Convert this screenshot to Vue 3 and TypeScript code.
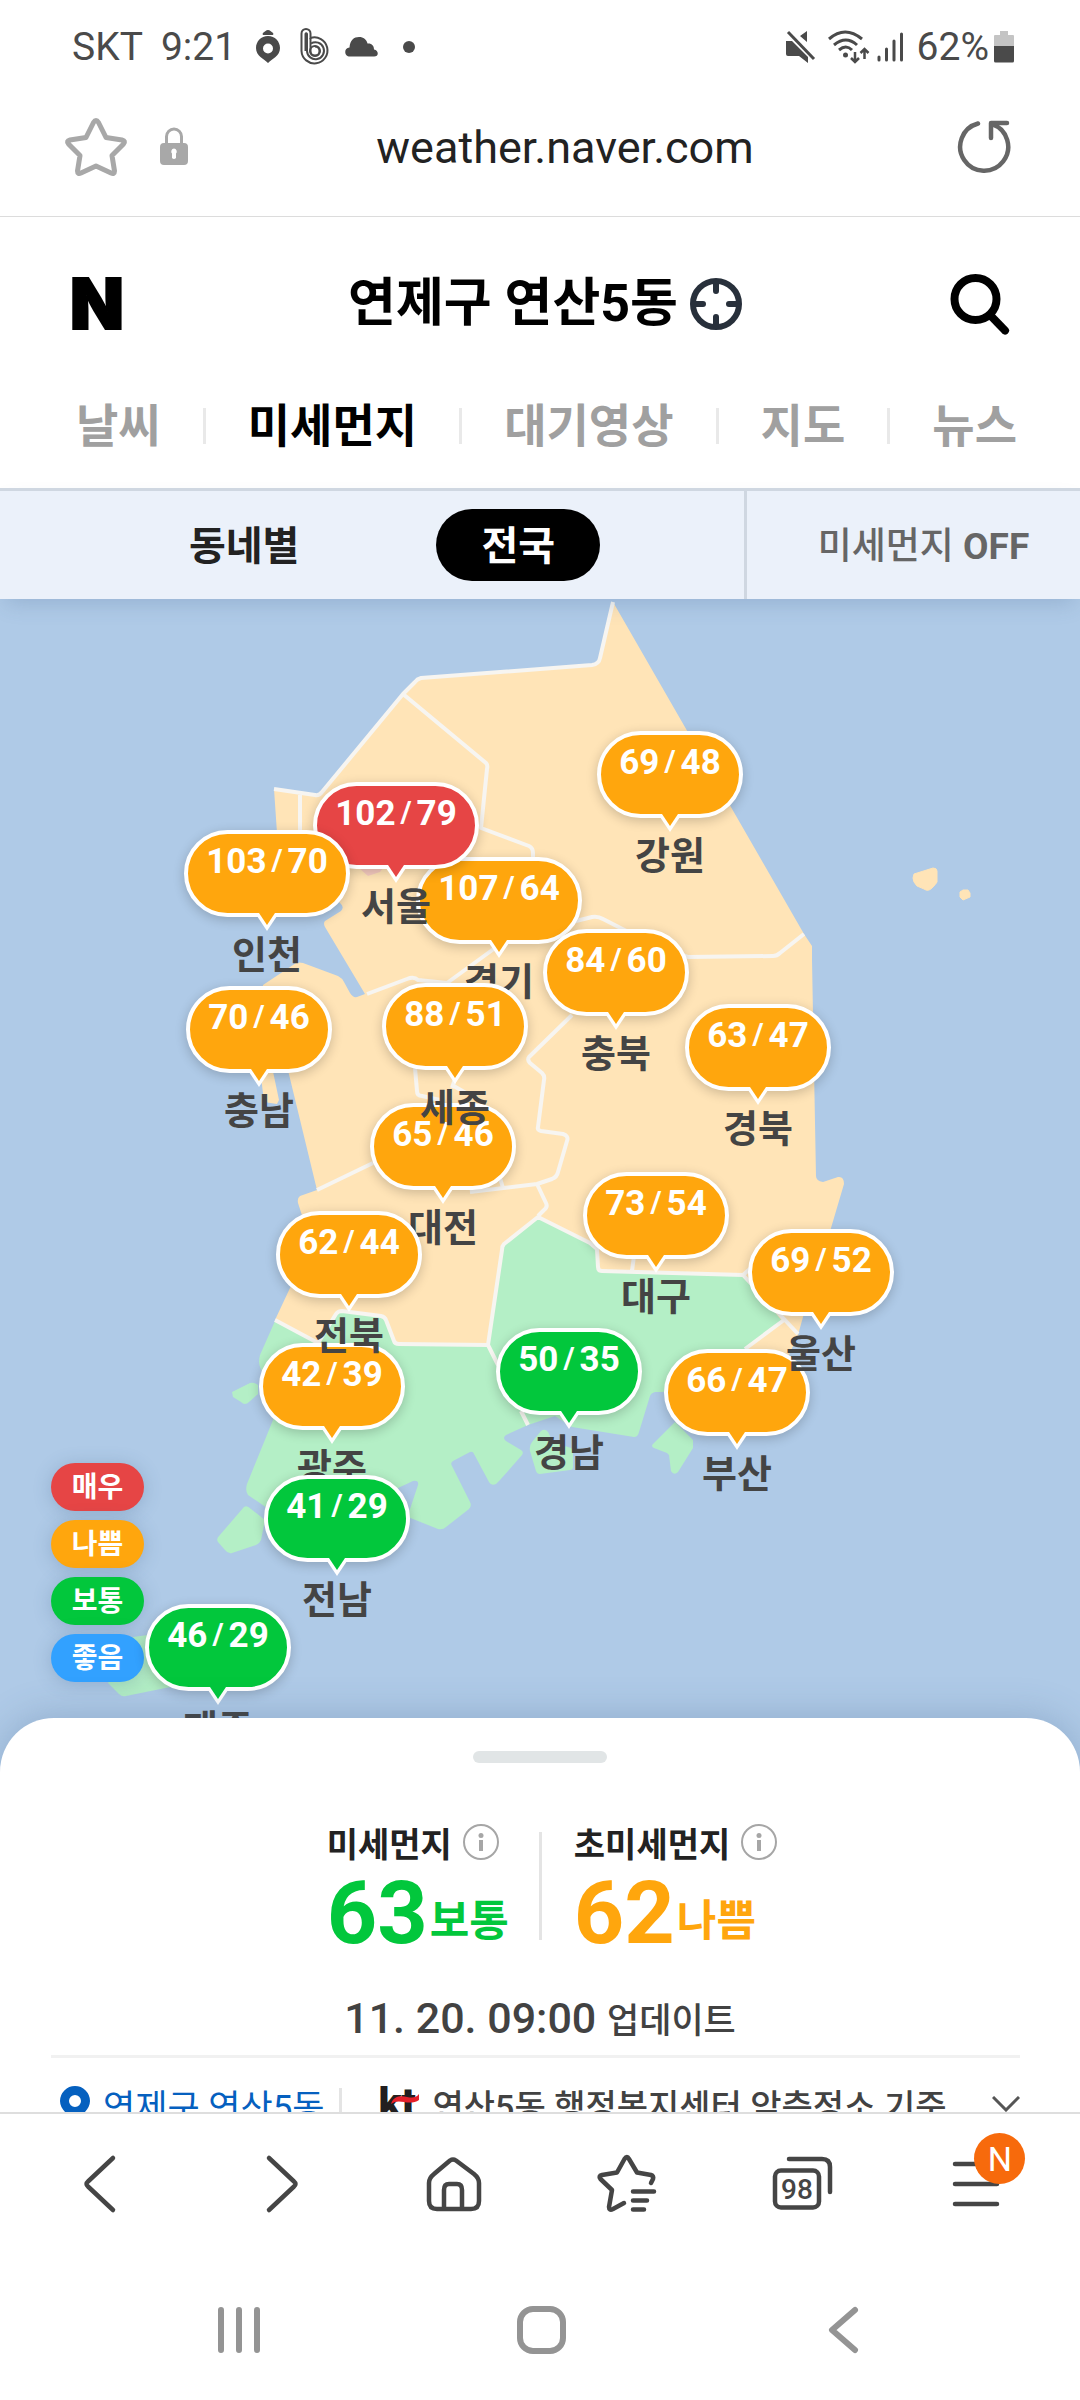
<script setup lang="ts">
type Grade = 'worst' | 'bad' | 'normal' | 'good'

interface Pin {
  name: string
  pm10: number
  pm25: number
  grade: Grade
  x: number
  y: number
}

const MAP_WIDTH = 1080
const MAP_HEIGHT = 1173

// Later entries are stacked above earlier ones.
const pins: Pin[] = [
  { name: '경기', pm10: 107, pm25: 64, grade: 'bad', x: 499, y: 258 },
  { name: '서울', pm10: 102, pm25: 79, grade: 'worst', x: 396, y: 183 },
  { name: '인천', pm10: 103, pm25: 70, grade: 'bad', x: 267, y: 231 },
  { name: '강원', pm10: 69, pm25: 48, grade: 'bad', x: 670, y: 132 },
  { name: '충북', pm10: 84, pm25: 60, grade: 'bad', x: 616, y: 330 },
  { name: '경북', pm10: 63, pm25: 47, grade: 'bad', x: 758, y: 405 },
  { name: '충남', pm10: 70, pm25: 46, grade: 'bad', x: 259, y: 387 },
  { name: '대전', pm10: 65, pm25: 46, grade: 'bad', x: 443, y: 504 },
  { name: '세종', pm10: 88, pm25: 51, grade: 'bad', x: 455, y: 384 },
  { name: '광주', pm10: 42, pm25: 39, grade: 'bad', x: 332, y: 744 },
  { name: '전북', pm10: 62, pm25: 44, grade: 'bad', x: 349, y: 612 },
  { name: '대구', pm10: 73, pm25: 54, grade: 'bad', x: 656, y: 573 },
  { name: '부산', pm10: 66, pm25: 47, grade: 'bad', x: 737, y: 750 },
  { name: '울산', pm10: 69, pm25: 52, grade: 'bad', x: 821, y: 630 },
  { name: '경남', pm10: 50, pm25: 35, grade: 'normal', x: 569, y: 729 },
  { name: '전남', pm10: 41, pm25: 29, grade: 'normal', x: 337, y: 876 },
  { name: '제주', pm10: 46, pm25: 29, grade: 'normal', x: 218, y: 1005 },
]

const legend: { label: string; grade: Grade }[] = [
  { label: '매우', grade: 'worst' },
  { label: '나쁨', grade: 'bad' },
  { label: '보통', grade: 'normal' },
  { label: '좋음', grade: 'good' },
]

const tabs = ['날씨', '미세먼지', '대기영상', '지도', '뉴스']
const activeTab = '미세먼지'

const metrics: { name: string; value: number; label: string; grade: Grade }[] = [
  { name: '미세먼지', value: 63, label: '보통', grade: 'normal' },
  { name: '초미세먼지', value: 62, label: '나쁨', grade: 'bad' },
]

const pinStyle = (p: Pin) => ({
  left: `${(p.x / MAP_WIDTH) * 100}%`,
  top: `${(p.y / MAP_HEIGHT) * 100}%`,
})
</script>

<template>
  <div class="page">
    <div class="status">
      <span>SKT</span>
      <span class="clock">9:21</span>
      <svg class="s-pin" width="24" height="34" viewBox="0 0 24 34">
        <path d="M12 0c2 0 3 1.600 4.500 2.400 1.200.600 1.200 2.600 0 2.600h-9c-1.200 0-1.200-2 0-2.600C9 1.600 10 0 12 0z" fill="currentColor" />
        <path fill-rule="evenodd" d="M12 6c7 0 12 5.500 12 12 0 8-8 11-12 15C8 29 0 26 0 18 0 11.500 5 6 12 6zm0 7.500a5 5 0 1 0 0 10 5 5 0 0 0 0-10z" fill="currentColor" />
      </svg>
      <svg class="s-b" width="30" height="38" viewBox="0 0 30 38" fill="none" stroke="currentColor" stroke-width="2">
        <path d="M1.500 23V5.500a4.500 4.500 0 0 1 9 0V10a13 13 0 1 1-9 13z" />
        <path d="M5.500 23V6q.700-1.500 1.500 0v17a8.500 8.500 0 1 0 4-7.500" />
        <path d="M10.500 10v13a4.500 4.500 0 1 0 4.500-4.500" />
        <circle cx="15" cy="23" r="5" />
      </svg>
      <svg class="s-cloud" width="33" height="20" viewBox="0 0 33 20">
        <path d="M5 19.500C-1 19.500-1.500 11 4.500 10.500 5 3 9 0 14 0c4.500 0 7.500 2.500 8.500 6.500 4-.500 6.500 2 6.500 6 5 1 5 7 0 7z" fill="currentColor" />
      </svg>
      <i class="s-dot"></i>
      <span class="grow"></span>
      <svg width="30" height="34" viewBox="0 0 30 34">
        <path d="M0 11h6l16 16v6l-9-7H2q-2 0-2-2zM21 1v11l-7-6z" fill="currentColor" />
        <path d="M2 2l26 27" stroke="currentColor" stroke-width="3" />
      </svg>
      <svg class="s-wifi" width="42" height="34" viewBox="0 0 42 34" fill="none" stroke="currentColor" stroke-width="3">
        <path d="M1 9q16-14 33 0M6 15q12-10 23 0M11 20q7-6 13 0" />
        <circle cx="17.500" cy="25" r="2.500" fill="currentColor" stroke="none" />
        <path d="M27 22v9M23 28l4 4 4-4M36.500 29v-9M32.500 23l4-4 4 4" stroke-width="2.500" />
      </svg>
      <svg class="s-sig" width="27" height="32" viewBox="0 0 27 32" stroke="currentColor" stroke-width="3" stroke-linecap="round">
        <path d="M2 26v3M9.500 18v11M17 10v19M24.500 3v26" />
      </svg>
      <span>62%</span>
      <svg class="s-bat" width="20" height="32" viewBox="0 0 20 32">
        <path d="M6 0h8v4h5q1 0 1 1v11H0V5q0-1 1-1h5z" fill="#c4c4c4" />
        <path d="M0 15h20v15q0 1.500-1.500 1.500h-17Q0 31.500 0 30z" fill="currentColor" />
      </svg>
    </div>

    <div class="address">
      <button class="plain star" aria-label="즐겨찾기">
        <svg width="64" height="64" viewBox="0 0 64 64" fill="none" stroke="#a8a8a8" stroke-width="5" stroke-linejoin="round">
          <path d="M29.500 7.500q2.500-4 5 0l7.500 15 16 2.500q4 1 1.500 4L48 40.500l2.500 15.500q0 3.500-3.500 2L32 51l-15 7q-3.500 1.500-3.500-2L16 40.500 4.500 29q-2.500-3 1.500-4l16-2.500z" />
        </svg>
      </button>
      <svg class="lock" width="28" height="40" viewBox="0 0 28 40">
        <path d="M6.500 18V9.500a7.500 7.500 0 0 1 15 0V18" fill="none" stroke="#a8a8a8" stroke-width="3" />
        <path fill-rule="evenodd" d="M4 16h20q4 0 4 4v14q0 4-4 4H4q-4 0-4-4V20q0-4 4-4zm10 5.500a3 3 0 0 0-2 5V31q2 2 4 0v-4.500a3 3 0 0 0-2-5z" fill="#a8a8a8" />
      </svg>
      <input class="url" type="text" value="weather.naver.com" aria-label="주소" />
      <button class="plain reload" aria-label="새로고침">
        <svg width="58" height="58" viewBox="0 0 58 58" fill="none" stroke="#666" stroke-width="4.500" stroke-linecap="round" stroke-linejoin="round">
          <path d="M22 5.500A24 24 0 1 0 36 6" />
          <path d="M51 5H35v15" />
        </svg>
      </button>
    </div>

    <header class="header">
      <div class="title-row">
        <a class="logo" href="#" aria-label="네이버">N</a>
        <h1 class="title">
          연제구 연산5동
          <svg width="52" height="52" viewBox="0 0 52 52" fill="none" stroke="#28303b" stroke-width="6" stroke-linecap="round">
            <circle cx="26" cy="26" r="23" />
            <path d="M26 4v9M26 39v9M4 26h9M39 26h9" />
          </svg>
        </h1>
        <button class="plain search" aria-label="검색">
          <svg width="60" height="62" viewBox="0 0 60 62" fill="none" stroke="#000" stroke-width="8" stroke-linecap="round">
            <circle cx="25.500" cy="26" r="21" />
            <path d="M41 43l14 14.500" />
          </svg>
        </button>
      </div>
      <nav class="tabs">
        <template v-for="(tab, i) in tabs" :key="tab">
          <i v-if="i > 0" class="tab-line"></i>
          <a href="#" :class="['tab', { active: tab === activeTab }]">{{ tab }}</a>
        </template>
      </nav>
    </header>

    <div class="subbar">
      <div class="scope">
        <button class="chip">동네별</button>
        <button class="chip on">전국</button>
      </div>
      <button class="toggle">미세먼지 <b>OFF</b></button>
    </div>

    <main class="map">
      <svg class="land" viewBox="0 599 1080 1173" aria-hidden="true">
        <g fill="#ffe4b7">
          <path d="M613 602L600 658Q599 664 592 665L421 678Q417 679 415 682L403 694 322 792Q319 796 315 795L274 789 277 833 292 890 336 900Q346 906 341 911L325 921Q323 923 325 927L365 994 357 997Q353 998 350 993L344 982Q342 978 338 976L303 963Q299 962 296 963L263 985 255 1040 262 1085 264 1102 277 1104 279 1100 271 1062 286 1062 317 1190 300 1196Q297 1198 298 1203L310 1240 290 1288 275 1320 330 1380 600 1340 715 1370 780 1375 798 1335 803 1317 831 1228 844 1184Q844 1176 838 1177L823 1182Q816 1181 816 1176L812 960 812 946 804 934z" />
          <path d="M914 874L933 868Q937 868 937 871V882Q936 884 932 888 928 892 924 889L917 886Q913 882 913 878zM963 890l5 0 2 3v4l-7 3-3-3v-5z" stroke="#ffe4b7" stroke-width="1" stroke-linejoin="round" />
        </g>
        <path d="M355 862l5 7 8 7 12-4 6-8z" fill="#f6cbc0" />
        <g fill="#b4efc6">
          <path d="M275 1321L260 1355Q258 1362 260 1367L276 1400 273 1420 247 1484Q245 1491 248 1495L270 1510 300 1540 398 1488 413 1481Q419 1480 418 1485L409 1512 408 1517 438 1529Q443 1530 446 1527L469 1509Q472 1506 470 1502L452 1466Q450 1463 453 1461L470 1452Q473 1451 474 1454L489 1482Q491 1486 496 1484L500 1480 522 1455Q524 1452 521 1450L506 1441Q502 1438 506 1435L528 1425 555 1416 572 1427 634 1437Q638 1437 639 1432L650 1396Q651 1393 655 1392L663 1392 700 1380 745 1349 782 1321 745 1275 602 1271Q598 1271 598 1267L597 1249 590 1243 538 1217 504 1244Q502 1246 502 1250L488 1345 399 1344Q395 1344 394 1341L386 1320Q385 1317 381 1316L342 1311Q338 1311 336 1314L318 1343z" />
          <path d="M232 1392L250 1383Q254 1382 258 1385V1394L249 1402Q245 1406 241 1402L233 1397zM244 1507Q247 1505 251 1509L265 1520 261 1540Q260 1543 256 1545L232 1553Q228 1554 225 1550L218 1542Q216 1539 219 1536zM675 1422L693 1440V1448L678 1472Q674 1476 671 1471L669 1455 667 1453 654 1448Q650 1446 654 1443zM541 1431q4-3 7 1l5 10 18 6q2 2 2 5v14q0 3-3 3l-30 4q-3 0-4-3l-6-20q-1-5 2-9zM108 1683L133 1637 200 1628 225 1650 205 1680 126 1696Q122 1697 119 1694z" />
        </g>
        <g fill="none" stroke="#f7f5f1" stroke-width="4" stroke-linejoin="round">
          <path d="M613 602L600 658Q599 664 592 665L421 678Q417 679 415 682L403 694 322 792Q319 796 315 795L274 789" />
          <path d="M403 694L486 763Q488 765 487 769L481 828 529 846Q533 848 533 853V870L560 925 592 917Q598 916 603 919L640 938 688 957 773 956Q777 956 780 953L804 934" />
          <path d="M300 795v40M367 994L407 979Q414 976 418 980L447 983 495 948 530 930" />
          <path d="M572 1015L529 1057Q527 1060 530 1063L542 1073Q545 1076 544 1080L538 1127Q537 1130 541 1131L563 1134Q569 1136 567 1141L558 1172Q557 1177 552 1179L537 1184 470 1192M537 1184L546 1203Q548 1207 544 1210L538 1216" />
          <path d="M415 1068L417 1091Q417 1096 422 1096L440 1100M452 1088l4-12M452 1085l14 8M317 1190L373 1163M500 1178l3 10" />
          <path d="M275 1320L318 1343 336 1314Q338 1311 342 1311L381 1316Q385 1317 386 1320L394 1341Q395 1344 399 1344L488 1345 502 1250Q502 1246 504 1244L538 1217 590 1243 597 1249 598 1267Q598 1271 602 1271L743 1275 760 1260M743 1275L798 1334M784 1320L745 1349M634 1256l-2 15M488 1345l10 20M521 1411l7 14" />
        </g>
      </svg>

      <ul class="legend">
        <li v-for="l in legend" :key="l.label" :class="l.grade">{{ l.label }}</li>
      </ul>

      <a v-for="p in pins" :key="p.name" href="#" class="pin" :style="pinStyle(p)">
        <span :class="['bubble', p.grade, { wide: p.pm10 > 99 }]">
          <span>{{ p.pm10 }}</span><span class="slash">/</span><span>{{ p.pm25 }}</span>
          <svg class="tail" width="20" height="18" viewBox="0 0 20 18">
            <path d="M0 0h20v3L10 18 0 3z" fill="#fff" />
            <path d="M2 0h16L10 12z" fill="currentColor" />
          </svg>
        </span>
        <span class="pin-name">{{ p.name }}</span>
      </a>
    </main>

    <section class="sheet">
      <i class="handle"></i>
      <div class="metrics">
        <div v-for="m in metrics" :key="m.name" class="metric">
          <div class="metric-name">
            {{ m.name }}
            <svg width="36" height="36" viewBox="0 0 36 36" fill="none" stroke="#a6a6a6" stroke-width="2">
              <circle cx="18" cy="18" r="17" />
              <path d="M18 16v11" stroke-width="4" />
              <circle cx="18" cy="11.500" r="2.500" fill="#a6a6a6" stroke="none" />
            </svg>
          </div>
          <div :class="['metric-value', `text-${m.grade}`]">
            <strong>{{ m.value }}</strong><em>{{ m.label }}</em>
          </div>
        </div>
      </div>
      <p class="updated">11. 20. 09:00 <span>업데이트</span></p>
      <div class="station">
        <div class="station-row">
          <a href="#" class="place">
            <svg width="30" height="36" viewBox="0 0 30 36">
              <path fill-rule="evenodd" d="M15 0a15 15 0 0 1 15 15c0 9-9 14-15 21C9 29 0 24 0 15A15 15 0 0 1 15 0zm0 9a6 6 0 1 0 0 12 6 6 0 0 0 0-12z" fill="#0560bf" />
            </svg>
            연제구 연산5동
          </a>
          <i class="station-line"></i>
          <span class="kt">kt
            <svg width="30" height="10" viewBox="0 0 30 10"><path d="M1 10C4 1 12 2 17 3s9 1 12-3v6c-4 3-10 3-15 2S5 7 1 10z" fill="#e5202a" /></svg>
          </span>
          <span class="station-name">연산5동 행정복지센터 앞측정소 기준</span>
          <svg class="chevron" width="28" height="16" viewBox="0 0 28 16" fill="none" stroke="#555" stroke-width="3"><path d="M1 1l13 13L27 1" /></svg>
        </div>
      </div>
    </section>

    <nav class="browser-nav">
      <button class="plain" aria-label="뒤로">
        <svg width="64" height="64" viewBox="0 0 64 64"><path d="M45 6L20 29.500q-3 2.500 0 5L45 58" /></svg>
      </button>
      <button class="plain" aria-label="앞으로">
        <svg width="64" height="64" viewBox="0 0 64 64"><path d="M26 6l25 23.500q3 2.500 0 5L26 58" /></svg>
      </button>
      <button class="plain" aria-label="홈">
        <svg width="64" height="64" viewBox="0 0 64 64">
          <path d="M32 8.500q3-2 6 0L56 22q5 4 5 9v18q0 8-8 8H19q-8 0-8-8V31q0-5 5-9z M26 57V38q0-6 5-6h8q5 0 5 6v19" />
        </svg>
      </button>
      <button class="plain" aria-label="북마크">
        <svg width="64" height="64" viewBox="0 0 64 64">
          <path d="M57 31l2-4q1-3-2-4l-14-2.500L35 7q-2-4-4.500 0L23 20.500 8 23q-4 1-1.500 4L18 38l-3 17q0 4 4 2l11-6M39 39.500h21M39 48.500h14M39 57.500h11" />
        </svg>
      </button>
      <button class="plain tab-count" aria-label="탭">
        <svg width="64" height="64" viewBox="0 0 64 64">
          <rect x="6" y="18.500" width="44" height="37" rx="6" />
          <path d="M20 7h33q8 0 8 8v25" />
        </svg>
        <span>98</span>
      </button>
      <button class="plain menu" aria-label="메뉴">
        <svg width="64" height="64" viewBox="0 0 64 64"><path d="M11 12h42M11 32h42M11 52h42" /></svg>
        <span class="badge">N</span>
      </button>
    </nav>

    <nav class="system-nav">
      <button class="plain" aria-label="최근 앱">
        <svg width="56" height="56" viewBox="0 0 56 56"><path d="M10 8v40M28 8v40M46 8v40" /></svg>
      </button>
      <button class="plain" aria-label="홈 화면">
        <svg width="56" height="56" viewBox="0 0 56 56"><rect x="8" y="7" width="43" height="42" rx="13" /></svg>
      </button>
      <button class="plain" aria-label="이전">
        <svg width="56" height="56" viewBox="0 0 56 56"><path d="M42 8L19 28l23 20" /></svg>
      </button>
    </nav>
  </div>
</template>

<style>
body {
  margin: 0;
}
</style>

<style scoped>
.page {
  display: flex;
  flex-direction: column;
  min-height: 100vh;
  background: #fff;
  font-family: Roboto, 'Noto Sans CJK KR', sans-serif;
  color: #222;
}

a {
  color: inherit;
  text-decoration: none;
}

button {
  font: inherit;
  color: inherit;
  border: 0;
  background: none;
  padding: 0;
}

svg {
  display: block;
}

.plain {
  display: flex;
  align-items: center;
  justify-content: center;
}

.grow {
  flex: 1;
}

/* status bar */
.status {
  display: flex;
  align-items: center;
  height: 94px;
  padding: 0 66px 0 72px;
  font-size: 39px;
  color: #4a4a4a;
}

.clock {
  margin-left: 18px;
}

.s-pin {
  margin-left: 20px;
}

.s-b {
  margin-left: 20px;
}

.s-cloud {
  margin-left: 15px;
}

.s-dot {
  width: 12px;
  height: 12px;
  margin-left: 25px;
  border-radius: 50%;
  background: #4a4a4a;
}

.s-wifi {
  margin-left: 12px;
}

.s-sig {
  margin: 0 13px 0 7px;
}

.s-bat {
  margin-left: 5px;
}

/* address bar */
.address {
  display: flex;
  align-items: center;
  height: 123px;
  padding: 0 66px 16px 64px;
  border-bottom: 1px solid #dcdcdc;
  box-sizing: border-box;
}

.lock {
  margin: 0 12px 0 32px;
}

.url {
  flex: 1;
  min-width: 0;
  border: 0;
  padding: 0;
  background: none;
  text-align: center;
  font: 45px Roboto, sans-serif;
  color: #222;
}

.reload {
  width: 84px;
  justify-content: flex-end;
}

/* service header */
.header {
  padding-bottom: 27px;
}

.title-row {
  display: grid;
  grid-template-columns: 1fr auto 1fr;
  align-items: center;
  height: 174px;
  padding: 0 60px 0 70px;
}

.logo {
  font: 900 70px/70px Inter, sans-serif;
  -webkit-text-stroke: 2px #000;
  color: #000;
}

.title {
  display: flex;
  align-items: center;
  gap: 12px;
  margin: 0;
  font-size: 52px;
  line-height: 70px;
  font-weight: 700;
  color: #000;
}

.search {
  justify-self: end;
  width: 80px;
  height: 80px;
}

.tabs {
  display: flex;
  align-items: center;
  justify-content: space-between;
  height: 70px;
  padding: 0 63px 0 76px;
}

.tab {
  font-size: 46px;
  line-height: 64px;
  font-weight: 700;
  color: #a0a0a0;
}

.tab.active {
  color: #000;
}

.tab-line {
  width: 3px;
  height: 36px;
  background: #e9e9e9;
}

/* scope switch */
.subbar {
  position: relative;
  z-index: 3;
  display: grid;
  grid-template-columns: 744fr 336fr;
  height: 108px;
  border-top: 3px solid #cfd7e1;
  background: #ebf1fa;
  box-shadow: 0 10px 20px -6px rgba(60, 90, 130, 0.22);
}

.scope {
  display: flex;
  align-items: center;
  justify-content: center;
  gap: 92px;
}

.chip {
  height: 72px;
  padding: 0 45px 4px;
  border-radius: 36px;
  font-size: 40px;
  font-weight: 700;
  color: #222;
}

.chip.on {
  background: #000;
  color: #fff;
}

.toggle {
  border-left: 3px solid #cfd7e1;
  padding: 0 0 4px 20px;
  font-size: 37px;
  font-weight: 500;
  color: #666;
}

/* map */
.map {
  position: relative;
  width: 100%;
  aspect-ratio: 1080 / 1173;
  overflow: hidden;
  background: #afcae7;
}

.land {
  width: 100%;
  height: 100%;
}

.worst {
  background: #e64545;
  color: #e64545;
}

.bad {
  background: #ffa60d;
  color: #ffa60d;
}

.normal {
  background: #02c73c;
  color: #02c73c;
}

.good {
  background: #32a1ff;
  color: #32a1ff;
}

.legend {
  position: absolute;
  left: 51px;
  bottom: 90px;
  display: flex;
  flex-direction: column;
  gap: 9px;
  margin: 0;
  padding: 0;
  list-style: none;
}

.legend li {
  width: 93px;
  height: 48px;
  border-radius: 24px;
  box-shadow: 0 2px 18px rgba(60, 90, 130, 0.25);
  color: #fff;
  font-size: 28px;
  line-height: 50px;
  font-weight: 700;
  text-align: center;
}

.pin {
  position: absolute;
  display: flex;
  flex-direction: column;
  align-items: center;
  transform: translateX(-50%);
}

.bubble {
  position: relative;
  display: flex;
  justify-content: center;
  gap: 5px;
  box-sizing: border-box;
  width: 146px;
  height: 87px;
  border: 4px solid #fff;
  border-radius: 44px;
  box-shadow: 0 3px 12px rgba(0, 0, 0, 0.2);
  font-size: 35px;
  line-height: 56px;
  font-weight: 700;
}

.bubble.wide {
  width: 166px;
}

.bubble span {
  color: #fff;
}

.bubble .slash {
  font-size: 30px;
  line-height: 52px;
}

.tail {
  position: absolute;
  left: 50%;
  top: 79px;
  margin-left: -10px;
}

.pin-name {
  margin-top: 10px;
  font-size: 38px;
  line-height: 56px;
  font-weight: 700;
  color: #444;
}

/* bottom sheet */
.sheet {
  position: relative;
  z-index: 2;
  display: flex;
  flex-direction: column;
  align-items: center;
  margin-top: -54px;
  border-radius: 54px 54px 0 0;
  background: #fff;
  box-shadow: 0 -3px 36px rgba(60, 90, 130, 0.25);
}

.handle {
  width: 134px;
  height: 12px;
  margin-top: 33px;
  border-radius: 6px;
  background: #e1e5e6;
}

.metrics {
  display: flex;
  margin-top: 60px;
  padding-left: 24px;
}

.metric + .metric {
  position: relative;
  margin-left: 30px;
  padding-left: 35px;
}

.metric + .metric::before {
  content: '';
  position: absolute;
  left: 0;
  top: 9px;
  width: 3px;
  height: 108px;
  background: #e4e4e4;
}

.metric-name {
  display: flex;
  align-items: center;
  gap: 11px;
  height: 38px;
  font-size: 34px;
  font-weight: 700;
}

.metric-value {
  display: flex;
  align-items: flex-end;
  height: 104px;
}

.metric-value strong {
  font-size: 88px;
  line-height: 104px;
  font-weight: 700;
}

.metric-value em {
  margin-left: 2px;
  font-size: 43px;
  line-height: 88px;
  font-style: normal;
  font-weight: 700;
}

.text-normal {
  color: #02c73c;
}

.text-bad {
  color: #ffa60d;
}

.updated {
  margin: 23px 0 7px;
  font-size: 43px;
  line-height: 60px;
  font-weight: 500;
  color: #424242;
}

.updated span {
  font-size: 35px;
  line-height: 40px;
}

.station {
  align-self: stretch;
  height: 54px;
  margin: 0 60px 0 51px;
  border-top: 3px solid #f1f1f1;
  overflow: hidden;
}

.station-row {
  display: flex;
  align-items: center;
  height: 92px;
  padding-left: 9px;
  font-size: 34px;
  white-space: nowrap;
}

.place {
  display: flex;
  align-items: center;
  gap: 13px;
  font-size: 35px;
  color: #0560bf;
}

.station-line {
  width: 3px;
  height: 32px;
  margin: 0 37px 0 14px;
  background: #e4e4e4;
}

.kt {
  position: relative;
  width: 42px;
  margin-right: 12px;
  font: 900 42px/48px Roboto, sans-serif;
  color: #221f20;
}

.kt svg {
  position: absolute;
  left: 11px;
  top: 14px;
}

.station-name {
  font-weight: 500;
  color: #424242;
}

.chevron {
  margin-left: auto;
}

/* browser toolbar */
.browser-nav {
  position: relative;
  z-index: 2;
  display: grid;
  grid-template-columns: repeat(6, 1fr);
  height: 140px;
  margin-top: auto;
  padding: 0 16px 0 12px;
  border-top: 2px solid #dedede;
  background: #fff;
  color: #454545;
}

.browser-nav svg {
  fill: none;
  stroke: currentColor;
  stroke-width: 4.5;
  stroke-linecap: round;
  stroke-linejoin: round;
}

.tab-count,
.menu {
  position: relative;
}

.tab-count span {
  position: absolute;
  left: 50%;
  top: 50%;
  width: 44px;
  margin: -10px 0 0 -26px;
  font-size: 28px;
  line-height: 32px;
  font-weight: 500;
  text-align: center;
}

.badge {
  position: absolute;
  left: 50%;
  top: 19px;
  width: 51px;
  height: 51px;
  margin-left: -2px;
  border-radius: 50%;
  background: #f76a0c;
  color: #fff;
  font-size: 34px;
  line-height: 52px;
  text-align: center;
}

/* system navigation */
.system-nav {
  display: grid;
  grid-template-columns: repeat(3, 1fr);
  height: 140px;
  padding: 6px 88px 0;
}

.system-nav svg {
  fill: none;
  stroke: #949494;
  stroke-width: 6;
  stroke-linecap: round;
  stroke-linejoin: round;
}
</style>
